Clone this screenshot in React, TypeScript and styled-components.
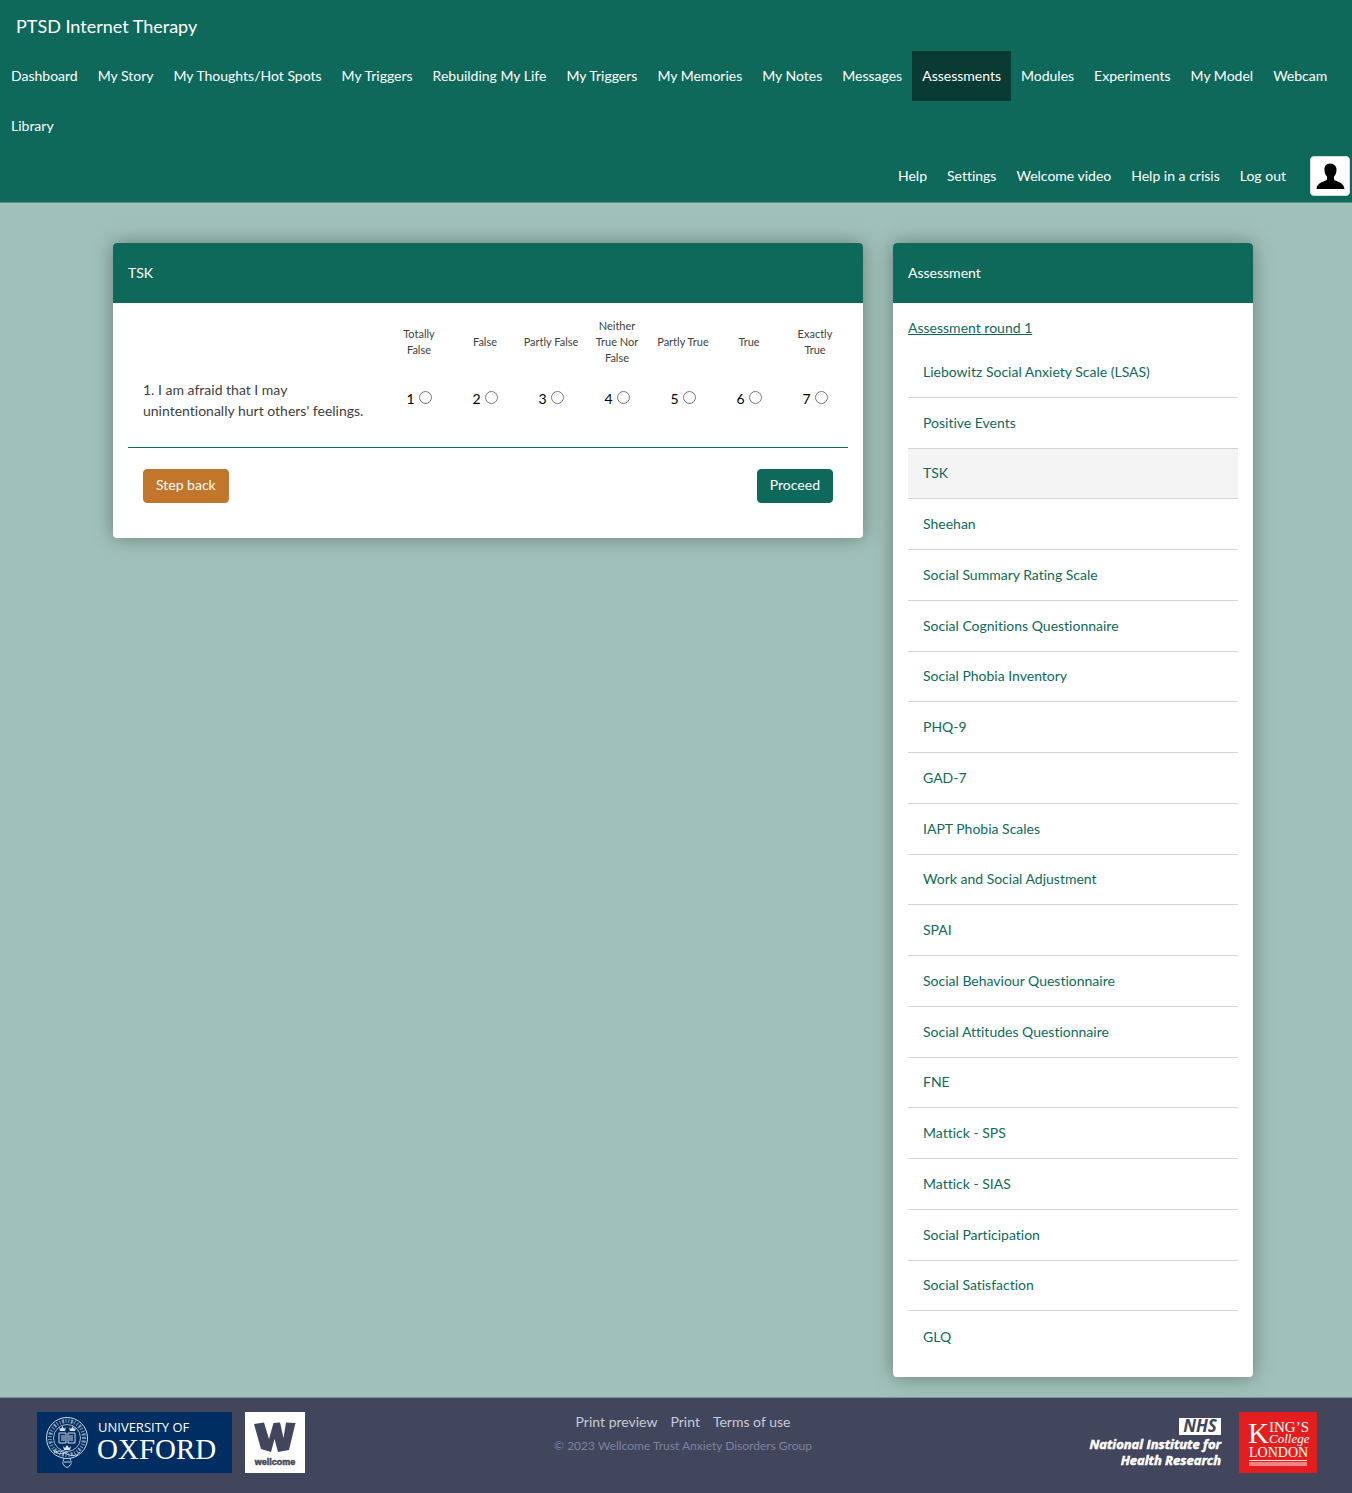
import React from "react";
import styled, { createGlobalStyle } from "styled-components";

const teal = "#0e695b";
const font = 'Lato, "Liberation Sans", sans-serif';
const serif = '"Liberation Serif", serif';

const GlobalStyle = createGlobalStyle`
  *, *::before, *::after { box-sizing: border-box; }
  body {
    margin: 0;
    background: #a0c1b9;
    color: #404040;
    font: 14px/20px ${font};
    font-variant-ligatures: none;
  }
  ul { list-style: none; margin: 0; padding: 0; }
  a { color: inherit; text-decoration: none; }
`;

const Page = styled.div`
  display: flex;
  flex-direction: column;
  min-height: 100vh;
`;

const Header = styled.header`
  padding-bottom: 1px;
  background: ${teal};
  border-bottom: 1px solid #5c8f85;
  color: #fff;
`;

const Brand = styled.a`
  display: block;
  padding: 16px 16px 15px;
  font-size: 18px;
`;

const NavList = styled.ul<{ $end?: boolean }>`
  display: flex;
  flex-wrap: wrap;
  align-items: center;
  justify-content: ${(p) => (p.$end ? "flex-end" : "flex-start")};
  padding: 0 2px 0 1px;
`;

const NavLink = styled.a<{ $active?: boolean }>`
  display: block;
  padding: 15px 10px;
  background: ${(p) => (p.$active ? "#0a3a34" : "transparent")};
`;

const Avatar = styled.a`
  display: block;
  width: 40px;
  height: 40px;
  margin-left: 14px;
  border: 1px solid #cfdfdc;
  border-radius: 4px;
  background: #fff;
  svg { display: block; }
`;

const Main = styled.main`
  flex: 1;
  display: grid;
  grid-template-columns: minmax(0, 750px) minmax(0, 360px);
  justify-content: center;
  gap: 30px;
  padding: 40px 16px 20px 30px;
`;

const Panel = styled.section<{ $fill?: boolean }>`
  display: flex;
  flex-direction: column;
  align-self: ${(p) => (p.$fill ? "stretch" : "start")};
  border-radius: 4px;
  background: #fff;
  box-shadow: 0 0 20px rgba(0, 0, 0, 0.35);
`;

const PanelTitle = styled.h2`
  margin: 0;
  padding: 20px 15px;
  border-radius: 4px 4px 0 0;
  background: ${teal};
  color: #fff;
  font-size: 14px;
  font-weight: 400;
`;

const PanelBody = styled.div`
  flex: 1;
  display: flex;
  flex-direction: column;
  padding: 15px;
`;

const Scale = styled.table`
  width: 100%;
  table-layout: fixed;
  border-collapse: collapse;
  border-bottom: 1px solid ${teal};
`;

const ScaleHead = styled.th`
  width: 66px;
  height: 48px;
  padding: 0 4px;
  font-size: 11px;
  font-weight: 400;
  line-height: 16px;
`;

const SpacerHead = styled.td``;

const Question = styled.th`
  padding: 13px 15px 26px;
  font-weight: 400;
  line-height: 21px;
  text-align: left;
`;

const Answer = styled.td`
  padding: 22px 0 38px;
  color: #000;
  line-height: 20px;
`;

const Choice = styled.label`
  display: flex;
  align-items: center;
  justify-content: center;
  gap: 4px;
`;

const Radio = styled.input`
  width: 13px;
  height: 13px;
  margin: 0 0 2px;
`;

const Actions = styled.div`
  display: flex;
  justify-content: space-between;
  padding: 21px 15px 20px;
`;

const Button = styled.button<{ $tone: string }>`
  padding: 5px 12px 7px;
  border: 1px solid ${(p) => p.$tone};
  border-radius: 4px;
  background: ${(p) => p.$tone};
  color: #fff;
  font: inherit;
`;

const RoundLink = styled.a`
  align-self: flex-start;
  margin-bottom: 9px;
  color: ${teal};
  text-decoration: underline;
`;

const AssessmentList = styled.ul`
  flex: 1;
  display: grid;
  grid-auto-rows: 1fr;
`;

const AssessmentItem = styled.li<{ $active?: boolean }>`
  display: flex;
  border-bottom: 1px solid #d5d5d5;
  background: ${(p) => (p.$active ? "#f4f4f4" : "transparent")};
  &:last-child { border-bottom: 0; }
`;

const AssessmentLink = styled.a`
  flex: 1;
  display: flex;
  align-items: center;
  padding: 14px 15px;
  color: ${teal};
`;

const Footer = styled.footer`
  display: grid;
  grid-template-columns: 1fr auto 1fr;
  gap: 20px;
  padding: 14px 35px 20px 37px;
  border-top: 1px solid #7d8f97;
  background: #42465c;
`;

const Logos = styled.div<{ $end?: boolean; $gap: number }>`
  display: flex;
  justify-content: ${(p) => (p.$end ? "flex-end" : "flex-start")};
  gap: ${(p) => p.$gap}px;
  svg { display: block; flex: none; }
`;

const FooterText = styled.div`
  text-align: center;
  padding-left: 12px;
`;

const FooterLinks = styled.div`
  display: flex;
  justify-content: center;
  gap: 13px;
  color: #c8cad6;
`;

const Copyright = styled.p`
  margin: 4px 0 0;
  color: #7e82a0;
  font-size: 12px;
`;

const nav = ["Dashboard", "My Story", "My Thoughts/Hot Spots", "My Triggers", "Rebuilding My Life", "My Triggers", "My Memories", "My Notes", "Messages", "Assessments", "Modules", "Experiments", "My Model", "Webcam", "Library"];
const userNav = ["Help", "Settings", "Welcome video", "Help in a crisis", "Log out"];
const scale = ["Totally False", "False", "Partly False", "Neither True Nor False", "Partly True", "True", "Exactly True"];
const assessments = ["Liebowitz Social Anxiety Scale (LSAS)", "Positive Events", "TSK", "Sheehan", "Social Summary Rating Scale", "Social Cognitions Questionnaire", "Social Phobia Inventory", "PHQ-9", "GAD-7", "IAPT Phobia Scales", "Work and Social Adjustment", "SPAI", "Social Behaviour Questionnaire", "Social Attitudes Questionnaire", "FNE", "Mattick - SPS", "Mattick - SIAS", "Social Participation", "Social Satisfaction", "GLQ"];

const OxfordLogo = () => (
  <svg width="195" height="61" viewBox="0 0 195 61" role="img" aria-label="University of Oxford">
    <rect width="195" height="61" fill="#002e62" />
    <g fill="none" stroke="#cfd8e4">
      <circle cx="30" cy="26" r="20.5" strokeWidth="1" />
      <circle cx="30" cy="26" r="17" strokeWidth="4" strokeDasharray="1 1.6 2 1.4 1 2" opacity="0.65" />
      <circle cx="30" cy="26" r="13.5" strokeWidth="0.8" />
      <path d="M17 41c5-4 9-1 13 1s9 3 13-2M16 38c6 6 11 3 15 2M27 46c-1 4-2 6 0 7 1 3 5 3 6 0 2-1 1-3 0-7M27 50h6" strokeWidth="1" />
      <path d="M22 21h7v10h-7zM31 21h7v10h-7zM24 24h4M24 26h4M24 28h4M32 24h4M32 26h4M32 28h4" strokeWidth="1" />
    </g>
    <path d="M22 15l2 2 1.500-3 1.500 3 2-2-1 4h-5zM32 15l2 2 1.500-3 1.500 3 2-2-1 4h-5zM26 34l2 2 2-3 2 3 2-2-1 4h-6z" fill="#dde4ec" />
    <text x="61" y="20" fill="#fff" fontFamily="'Open Sans', sans-serif" fontSize="13" fontWeight="400">UNIVERSITY OF</text>
    <text x="60" y="47" fill="#fff" fontFamily={serif} fontSize="29">OXFORD</text>
  </svg>
);

const WellcomeLogo = () => (
  <svg width="60" height="61" viewBox="0 0 60 61" role="img" aria-label="Wellcome">
    <rect width="60" height="61" fill="#fff" />
    <path d="M9 12L19 10.500L24 27L28.500 11L35 10.500L38.500 26L41 10.500L50.500 11L44 38L33 40L29.500 27L26 40L16 37Z" fill="#42465c" />
    <text x="30" y="53" textAnchor="middle" fill="#42465c" stroke="#42465c" strokeWidth="0.5" fontFamily="'Liberation Sans', sans-serif" fontSize="9" fontWeight="700">wellcome</text>
  </svg>
);

const NihrLogo = () => (
  <svg width="140" height="61" viewBox="0 0 140 61" role="img" aria-label="NHS National Institute for Health Research">
    <rect x="94" y="6" width="42" height="17" fill="#fff" />
    <text x="115" y="20" textAnchor="middle" fill="#42465c" fontFamily="'Open Sans', sans-serif" fontSize="17" fontWeight="700" fontStyle="italic">NHS</text>
    <g fill="#fff" stroke="#fff" strokeWidth="0.5" fontFamily="'Open Sans', sans-serif" fontSize="13" fontWeight="700" fontStyle="italic" textAnchor="end">
      <text x="136" y="37">National Institute for</text>
      <text x="136" y="53">Health Research</text>
    </g>
  </svg>
);

const KingsLogo = () => (
  <svg width="78" height="61" viewBox="0 0 78 61" role="img" aria-label="King's College London">
    <rect width="78" height="61" fill="#e21e1e" />
    <g fill="#fff" fontFamily={serif}>
      <text x="9" y="31" fontSize="29">K</text>
      <text x="30" y="20" fontSize="15">ING’S</text>
      <text x="30" y="31" fontSize="13" fontStyle="italic">College</text>
      <text x="10" y="45" fontSize="14">LONDON</text>
    </g>
    <path d="M10 48.500h58M10 51h58M10 53h58" stroke="#fff" strokeWidth="0.9" />
  </svg>
);

export default function App() {
  return (
    <Page>
      <GlobalStyle />
      <Header>
        <Brand href="#">PTSD Internet Therapy</Brand>
        <nav aria-label="Main">
          <NavList>
            {nav.map((label, i) => (
              <li key={i}>
                <NavLink href="#" $active={label === "Assessments"}>{label}</NavLink>
              </li>
            ))}
          </NavList>
        </nav>
        <nav aria-label="Account">
          <NavList $end>
            {userNav.map((label) => (
              <li key={label}><NavLink href="#">{label}</NavLink></li>
            ))}
            <li>
              <Avatar href="#" aria-label="Profile">
                <svg width="38" height="38" viewBox="0 0 38 38">
                  <path d="M19 6.500c-4 0-6 3-5.500 7 .2 3 1.300 5 2.500 6v3c-1 2-10 2-10.500 9.500h28c-.5-7.500-9.500-7.500-10.500-9.500v-3c1.200-1 2.300-3 2.500-6 .5-4-2.500-7-6.500-7z" />
                </svg>
              </Avatar>
            </li>
          </NavList>
        </nav>
      </Header>

      <Main>
        <Panel>
          <PanelTitle>TSK</PanelTitle>
          <PanelBody>
            <Scale>
              <thead>
                <tr>
                  <SpacerHead />
                  {scale.map((label) => <ScaleHead key={label} scope="col">{label}</ScaleHead>)}
                </tr>
              </thead>
              <tbody>
                <tr>
                  <Question scope="row">1. I am afraid that I may unintentionally hurt others' feelings.</Question>
                  {scale.map((label, i) => (
                    <Answer key={label}>
                      <Choice>
                        {i + 1}
                        <Radio type="radio" name="q1" value={i + 1} />
                      </Choice>
                    </Answer>
                  ))}
                </tr>
              </tbody>
            </Scale>
            <Actions>
              <Button type="button" $tone="#c1762b">Step back</Button>
              <Button type="button" $tone={teal}>Proceed</Button>
            </Actions>
          </PanelBody>
        </Panel>

        <Panel $fill>
          <PanelTitle>Assessment</PanelTitle>
          <PanelBody>
            <RoundLink href="#">Assessment round 1</RoundLink>
            <AssessmentList>
              {assessments.map((label) => (
                <AssessmentItem key={label} $active={label === "TSK"}>
                  <AssessmentLink href="#">{label}</AssessmentLink>
                </AssessmentItem>
              ))}
            </AssessmentList>
          </PanelBody>
        </Panel>
      </Main>

      <Footer>
        <Logos $gap={13}>
          <OxfordLogo />
          <WellcomeLogo />
        </Logos>
        <FooterText>
          <FooterLinks>
            <a href="#">Print preview</a>
            <a href="#">Print</a>
            <a href="#">Terms of use</a>
          </FooterLinks>
          <Copyright>© 2023 Wellcome Trust Anxiety Disorders Group</Copyright>
        </FooterText>
        <Logos $end $gap={14}>
          <NihrLogo />
          <KingsLogo />
        </Logos>
      </Footer>
    </Page>
  );
}
